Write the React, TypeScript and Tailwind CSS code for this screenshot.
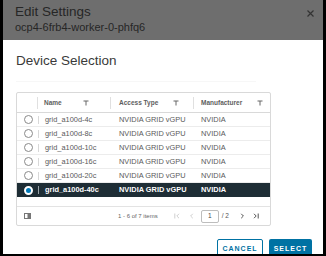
const rows = [
  "grid_a100d-4c",
  "grid_a100d-8c",
  "grid_a100d-10c",
  "grid_a100d-16c",
  "grid_a100d-20c",
  "grid_a100d-40c",
];

const Filter = () => (
  <svg width="6" height="6" viewBox="0 0 6 6" className="shrink-0">
    <path d="M0.5 1h5M3 1v4.5" stroke="#666" strokeWidth="1" fill="none" />
  </svg>
);

const Radio = ({ on }: { on?: boolean }) =>
  on ? (
    <span className="block w-[9px] h-[9px] rounded-full bg-[#0079b8] border-[2px] border-white" />
  ) : (
    <span className="block w-[9px] h-[9px] rounded-full border border-[#8a8a8a] bg-white" />
  );

export default function App() {
  return (
    <div
      className="w-[326px] h-[256px] bg-black pl-[3px] pr-[3px] pb-[2px] flex flex-col overflow-hidden"
      style={{ fontFamily: '"Liberation Sans", Arial, sans-serif' }}
    >
      {/* dimmed page title */}
      <div className="h-[40px] shrink-0 bg-[#6e6e6e] relative pl-[12px] pt-[4px]">
        <div className="text-[13.5px] leading-[16px] text-[#262626]">Edit Settings</div>
        <div className="text-[11px] leading-[13px] text-[#262626] mt-[1px]">ocp4-6frb4-worker-0-phfq6</div>
        <svg width="7" height="7" viewBox="0 0 7 7" className="absolute right-[9px] top-[10px]">
          <path d="M0.5 0.5l6 6M6.5 0.5l-6 6" stroke="#333" strokeWidth="1.2" />
        </svg>
      </div>

      {/* modal body */}
      <div className="flex-1 bg-white pl-[13px] pr-[6px] overflow-hidden">
        <div className="mt-[13px] text-[13.5px] leading-[16px] text-[#3a3a3a]">Device Selection</div>
        <div className="mt-[12px] w-[240px] h-px bg-[#f7f7f7]" />

        <div className="mt-[10px] w-[255px] border border-[#d9d9d9] rounded-[2px] text-[#5a5a5a]">
          {/* header */}
          <div className="h-[20px] flex items-center border-b border-[#d9d9d9] text-[6.5px] font-semibold text-[#5e5e5e]">
            <div className="w-[21px] h-full flex items-center justify-end">
              <span className="w-px h-[12px] bg-[#e0e0e0]" />
            </div>
            <div className="w-[73px] h-full flex items-center pl-[6px] pr-[6px] justify-between">
              <span>Name</span>
              <Filter />
              <span className="w-px h-[12px] bg-[#e0e0e0] -mr-[6px]" />
            </div>
            <div className="w-[83px] h-full flex items-center pl-[8px] pr-[6px] justify-between">
              <span>Access Type</span>
              <Filter />
              <span className="w-px h-[12px] bg-[#e0e0e0] -mr-[6px]" />
            </div>
            <div className="flex-1 h-full flex items-center pl-[7px] pr-[7px] justify-between">
              <span>Manufacturer</span>
              <Filter />
            </div>
          </div>

          {/* rows */}
          {rows.map((name, i) => {
            const sel = i === rows.length - 1;
            return (
              <div
                key={name}
                className={`h-[14px] flex items-center text-[7.4px] ${
                  sel ? "bg-[#1e2d35] text-white font-semibold" : "border-b border-[#ececec]"
                }`}
              >
                <div className="w-[21px] flex items-center justify-end pr-[5px]">
                  <Radio on={sel} />
                </div>
                <span className={`w-px h-[8px] ${sel ? "bg-[#9aa4a9]" : "bg-[#d8d8d8]"}`} />
                <div className="w-[72px] pl-[6px]">{name}</div>
                <div className="w-[83px] pl-[8px]">NVIDIA GRID vGPU</div>
                <div className="flex-1 pl-[7px]">NVIDIA</div>
              </div>
            );
          })}

          <div className="h-[10px] border-b border-[#e3e3e3]" />

          {/* footer */}
          <div className="h-[18px] flex items-center text-[6px] text-[#666]">
            <svg width="7" height="6" viewBox="0 0 7 6" className="ml-[7px]">
              <rect x="0.5" y="0.5" width="6" height="5" fill="none" stroke="#777" strokeWidth="1" />
              <rect x="3.5" y="0.5" width="3" height="5" fill="#777" />
            </svg>
            <span className="ml-[87px]">1 - 6 of 7 items</span>
            <svg width="6" height="6" viewBox="0 0 6 6" className="ml-[16px]">
              <path d="M0.8 0.5v5M5 0.8L2.8 3L5 5.2" stroke="#cfcfcf" strokeWidth="1" fill="none" />
            </svg>
            <svg width="5" height="6" viewBox="0 0 5 6" className="ml-[9px]">
              <path d="M3.8 0.8L1.6 3L3.8 5.2" stroke="#cfcfcf" strokeWidth="1" fill="none" />
            </svg>
            <div className="ml-[7px] w-[18px] h-[13px] border border-[#bdbdbd] rounded-[2px] flex items-center justify-center text-[6.5px] text-[#444]">
              1
            </div>
            <span className="ml-[3px] text-[6.5px] text-[#555]">/ 2</span>
            <svg width="5" height="6" viewBox="0 0 5 6" className="ml-[11px]">
              <path d="M1.2 0.8L3.4 3L1.2 5.2" stroke="#555" strokeWidth="1" fill="none" />
            </svg>
            <svg width="6" height="6" viewBox="0 0 6 6" className="ml-[8px]">
              <path d="M1 0.8L3.2 3L1 5.2M5.2 0.5v5" stroke="#555" strokeWidth="1" fill="none" />
            </svg>
          </div>
        </div>

        {/* actions */}
        <div className="mt-[13px] flex justify-end gap-[6px] pr-[5px]">
          <button className="w-[46px] h-[22px] border border-[#0072a3] rounded-[2px] text-[#0072a3] text-[7px] font-bold tracking-[1px] bg-white pb-[2px]">
            CANCEL
          </button>
          <button className="w-[43px] h-[22px] bg-[#0072a3] rounded-[2px] text-white text-[7px] font-bold tracking-[1px] pb-[2px]">
            SELECT
          </button>
        </div>
      </div>
    </div>
  );
}
